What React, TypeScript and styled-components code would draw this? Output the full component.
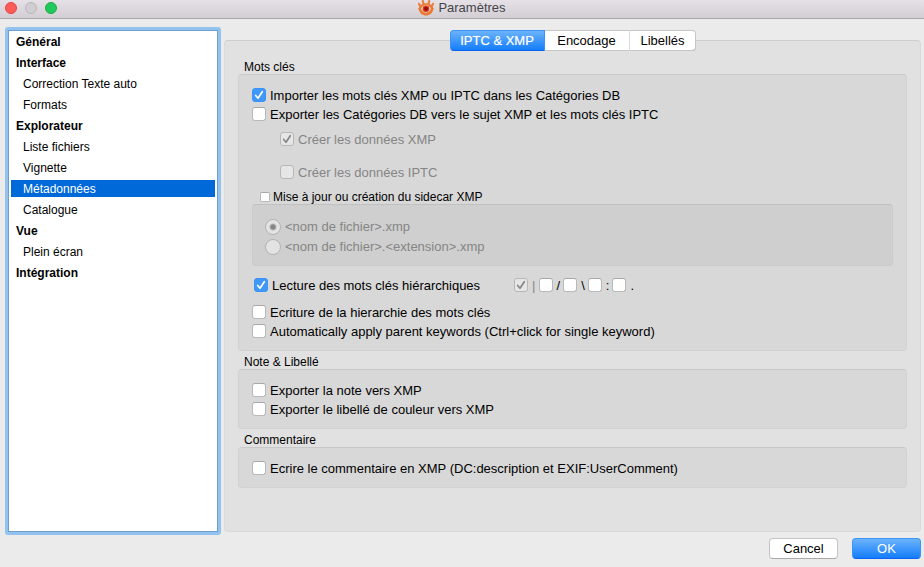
import React, { useId, useState } from "react";
import styled, { createGlobalStyle, css } from "styled-components";

const GlobalStyle = createGlobalStyle`
  *, *::before, *::after { box-sizing: border-box; }
  body {
    margin: 0;
    background: #ebebeb;
    color: #000;
    font-family: "Liberation Sans", Arial, sans-serif;
    font-size: 13px;
    line-height: 18px;
  }
  button, input { font: inherit; margin: 0; }
`;

const Window = styled.div`
  display: flex;
  flex-direction: column;
  min-height: 100vh;
`;

const TitleBar = styled.header`
  display: grid;
  grid-template-columns: 1fr auto 1fr;
  align-items: center;
  height: 19px;
  padding: 0 5px 2px;
  background: linear-gradient(#e6e1e7, #d2ced4);
  border-bottom: 1px solid #aaa8ab;
`;

const Lights = styled.div`
  display: flex;
  gap: 8px;
`;

const Light = styled.button<{ $fill: string; $edge: string }>`
  width: 12px;
  height: 12px;
  padding: 0;
  border: 1px solid ${(p) => p.$edge};
  border-radius: 50%;
  background: ${(p) => p.$fill};
`;

const Title = styled.h1`
  display: flex;
  align-items: center;
  gap: 4px;
  margin: 0;
  font-size: 13px;
  line-height: 16px;
  font-weight: 400;
  color: #454347;
`;

const Main = styled.div`
  flex: 1;
  display: flex;
  gap: 3px;
  padding: 8px 3px 0 5px;
`;

const Sidebar = styled.nav`
  flex: 0 0 216px;
  border: 3px solid #93c2ef;
  border-radius: 3px;
  background: #fff;
`;

const SidebarList = styled.ul`
  display: flex;
  flex-direction: column;
  gap: 4px;
  height: 100%;
  margin: 0;
  padding: 2px;
  border: 1px solid #6c9fcd;
  list-style: none;
`;

const SidebarItem = styled.button<{ $level: number; $active: boolean }>`
  display: block;
  width: 100%;
  height: 17px;
  padding: 2px 0 0 ${(p) => (p.$level ? 12 : 5)}px;
  border: 0;
  background: ${(p) => (p.$active ? "#0069d9" : "transparent")};
  color: ${(p) => (p.$active ? "#fff" : "#000")};
  font-size: 12px;
  line-height: 15px;
  font-weight: ${(p) => (p.$level ? 400 : 700)};
  text-align: left;
`;

const Panel = styled.main`
  flex: 1;
  min-width: 0;
  margin: 13px 0 3px;
  padding: 0 13px;
  border: 1px solid #dadada;
  border-top-color: #cecece;
  border-radius: 4px;
  background: #e1e1e1;
`;

const Tabs = styled.div`
  display: grid;
  grid-template-columns: 95px 84px 67px;
  width: max-content;
  height: 21px;
  margin: -11px auto 9px;
  border-radius: 4px;
  background: #fff;
  box-shadow: inset 0 0 0 1px #c6c6c6, inset 0 -1px 0 #aaa;
`;

const blueFace = css`
  color: #fff;
  background: linear-gradient(#6bb3fa, #147dfb);
  border: 1px solid #3d94f8;
  border-bottom-color: #0a63f5;
`;

const Tab = styled.button<{ $active: boolean }>`
  padding: 0;
  border: 0;
  line-height: 19px;
  background: transparent;
  color: #000;
  & + & + & { border-left: 1px solid #dcdcdc; }
  ${(p) =>
    p.$active &&
    css`
      ${blueFace}
      border-radius: 4px 0 0 4px;
      text-shadow: 0 0 1px rgba(255, 255, 255, 0.5);
    `}
`;

const Section = styled.section`
  & + & { margin-top: 4px; }
`;

const SectionTitle = styled.h2`
  margin: 0 0 0 6px;
  font-size: 12px;
  line-height: 14px;
  font-weight: 400;
`;

const Group = styled.div`
  display: flex;
  flex-direction: column;
  gap: 1px;
  padding: 11px 13px 10px;
  border: 1px solid #d2d2d2;
  border-top-color: #c8c8c8;
  border-radius: 4px;
  background: #d8d8d8;
`;

const Nested = styled.div`
  display: flex;
  flex-direction: column;
  gap: 15px;
  padding: 6px 0 8px 28px;
`;

const SidecarHeading = styled.div`
  padding-left: 8px;
`;

const RadioGroup = styled.fieldset`
  display: flex;
  flex-direction: column;
  gap: 2px;
  min-width: 0;
  margin: -1px 0 9px;
  padding: 13px 12px 9px;
  border: 1px solid #cbcbcb;
  border-top-color: #c0c0c0;
  border-radius: 4px;
  background: #cfcfcf;
`;

const OptionLine = styled.div`
  display: flex;
  align-items: center;
  padding: 0 0 8px 2px;
`;

const Separators = styled.div`
  display: flex;
  gap: 3px;
  margin-left: 34px;
`;

const Option = styled.label<{ $disabled?: boolean; $mini?: boolean }>`
  display: flex;
  align-items: center;
  gap: ${(p) => (p.$mini ? 3 : 4)}px;
  width: max-content;
  height: ${(p) => (p.$mini ? 14 : 18)}px;
  font-size: ${(p) => (p.$mini ? 12 : 13)}px;
  line-height: ${(p) => (p.$mini ? 14 : 18)}px;
  color: ${(p) => (p.$disabled ? "#858585" : "#000")};
`;

const Caption = styled.span`
  padding-top: 2px;
`;

const BoxFrame = styled.span`
  display: grid;
  & > * { grid-area: 1 / 1; }
`;

const Box = styled.input<{ $mini?: boolean }>`
  appearance: none;
  width: ${(p) => (p.$mini ? 10 : 14)}px;
  height: ${(p) => (p.$mini ? 10 : 14)}px;
  border: 1px solid #b9b9b9;
  border-top-color: #a8a8a8;
  border-radius: ${(p) => (p.$mini ? 2 : 3)}px;
  background: #fff;
  &:checked:not(:disabled) {
    border-color: #3a93f5;
    background: #3f98f7;
  }
  &:disabled {
    border-color: #b7b7b7;
    background: #e6e6e6;
  }
  & + svg {
    visibility: hidden;
    pointer-events: none;
    stroke: #fff;
  }
  &:checked + svg { visibility: visible; }
  &:disabled + svg { stroke: #868686; }
`;

const Radio = styled.input`
  appearance: none;
  width: 16px;
  height: 16px;
  border: 1px solid #b2b2b2;
  border-radius: 50%;
  background: #e3e3e3;
  &:checked { background: radial-gradient(circle, #858585 0 2px, #e3e3e3 4px); }
`;

const Footer = styled.footer`
  display: flex;
  justify-content: flex-end;
  gap: 14px;
  padding: 3px 3px 8px;
`;

const PushButton = styled.button<{ $primary?: boolean }>`
  width: 69px;
  height: 21px;
  padding: 0;
  border: 1px solid #c4c4c4;
  border-bottom-color: #aaa;
  border-radius: 4px;
  background: #fff;
  color: #000;
  line-height: 19px;
  ${(p) => p.$primary && blueFace}
`;

function EyeLogo() {
  return (
    <svg width="16" height="16" viewBox="0 0 16 16" aria-hidden="true">
      <path
        d="M2.500 6.500.9 3.800M5.500 4 4.900 1.200M10.500 4l.6-2.800M13.500 6.500l1.600-2.700"
        fill="none"
        stroke="#e8803c"
        strokeWidth="2.200"
        strokeLinecap="round"
      />
      <path d="M.3 8.500C2 5 4.700 3.200 8 3.200S14 5 15.700 8.500C14.600 13 11.800 15.600 8 15.600S1.400 13 .3 8.500Z" fill="#e87a35" />
      <path d="M2.800 8.800C4.300 6 6 4.800 8 4.800s3.700 1.200 5.200 4c-1.300 2.800-3.100 4-5.200 4s-3.900-1.200-5.200-4Z" fill="#f3c3a4" />
      <circle cx="8" cy="8.700" r="3.200" fill="#d83a1c" />
      <circle cx="8" cy="8.700" r="2" fill="#980c0c" />
    </svg>
  );
}

type CheckProps = {
  label: string;
  checked?: boolean;
  disabled?: boolean;
  mini?: boolean;
};

function Check({ label, checked, disabled, mini }: CheckProps) {
  const id = useId();
  return (
    <Option htmlFor={id} $disabled={disabled} $mini={mini}>
      <BoxFrame>
        <Box id={id} type="checkbox" defaultChecked={checked} disabled={disabled} $mini={mini} />
        {!mini && (
          <svg width="14" height="14" viewBox="0 0 14 14" fill="none" strokeWidth="1.7" strokeLinecap="round" strokeLinejoin="round">
            <path d="M3.700 7.500 6 10.200 10.300 3.700" />
          </svg>
        )}
      </BoxFrame>
      {mini ? label : <Caption>{label}</Caption>}
    </Option>
  );
}

const SECTIONS = [
  { label: "Général", level: 0 },
  { label: "Interface", level: 0 },
  { label: "Correction Texte auto", level: 1 },
  { label: "Formats", level: 1 },
  { label: "Explorateur", level: 0 },
  { label: "Liste fichiers", level: 1 },
  { label: "Vignette", level: 1 },
  { label: "Métadonnées", level: 1 },
  { label: "Catalogue", level: 1 },
  { label: "Vue", level: 0 },
  { label: "Plein écran", level: 1 },
  { label: "Intégration", level: 0 },
];

const TABS = ["IPTC & XMP", "Encodage", "Libellés"];

export default function App() {
  const [section, setSection] = useState("Métadonnées");
  return (
    <>
      <GlobalStyle />
      <Window>
        <TitleBar>
          <Lights>
            <Light aria-label="Fermer" $fill="#fc5b57" $edge="#e2463f" />
            <Light aria-label="Réduire" $fill="#d0ced0" $edge="#b9b7b9" />
            <Light aria-label="Agrandir" $fill="#1fc95a" $edge="#1dad43" />
          </Lights>
          <Title>
            <EyeLogo />
            Paramètres
          </Title>
        </TitleBar>
        <Main>
          <Sidebar>
            <SidebarList>
              {SECTIONS.map((s) => (
                <li key={s.label}>
                  <SidebarItem $level={s.level} $active={s.label === section} onClick={() => setSection(s.label)}>
                    {s.label}
                  </SidebarItem>
                </li>
              ))}
            </SidebarList>
          </Sidebar>
          <Panel>
            <Tabs role="tablist">
              {TABS.map((t, i) => (
                <Tab key={t} role="tab" aria-selected={i === 0} $active={i === 0}>
                  {t}
                </Tab>
              ))}
            </Tabs>
            <Section>
              <SectionTitle>Mots clés</SectionTitle>
              <Group>
                <Check label="Importer les mots clés XMP ou IPTC dans les Catégories DB" checked />
                <Check label="Exporter les Catégories DB vers le sujet XMP et les mots clés IPTC" />
                <Nested>
                  <Check label="Créer les données XMP" checked disabled />
                  <Check label="Créer les données IPTC" disabled />
                </Nested>
                <SidecarHeading>
                  <Check label="Mise à jour ou création du sidecar XMP" mini />
                </SidecarHeading>
                <RadioGroup disabled aria-label="Nom du fichier sidecar">
                  <Option $disabled>
                    <Radio type="radio" name="sidecar" defaultChecked />
                    {"<nom de fichier>.xmp"}
                  </Option>
                  <Option $disabled>
                    <Radio type="radio" name="sidecar" />
                    {"<nom de fichier>.<extension>.xmp"}
                  </Option>
                </RadioGroup>
                <OptionLine>
                  <Check label="Lecture des mots clés hiérarchiques" checked />
                  <Separators>
                    <Check label="|" checked disabled />
                    <Check label="/" />
                    <Check label="\" />
                    <Check label=":" />
                    <Check label="." />
                  </Separators>
                </OptionLine>
                <Check label="Ecriture de la hierarchie des mots clés" />
                <Check label="Automatically apply parent keywords (Ctrl+click for single keyword)" />
              </Group>
            </Section>
            <Section>
              <SectionTitle>Note &amp; Libellé</SectionTitle>
              <Group>
                <Check label="Exporter la note vers XMP" />
                <Check label="Exporter le libellé de couleur vers XMP" />
              </Group>
            </Section>
            <Section>
              <SectionTitle>Commentaire</SectionTitle>
              <Group>
                <Check label="Ecrire le commentaire en XMP (DC:description et EXIF:UserComment)" />
              </Group>
            </Section>
          </Panel>
        </Main>
        <Footer>
          <PushButton>Cancel</PushButton>
          <PushButton $primary>OK</PushButton>
        </Footer>
      </Window>
    </>
  );
}
